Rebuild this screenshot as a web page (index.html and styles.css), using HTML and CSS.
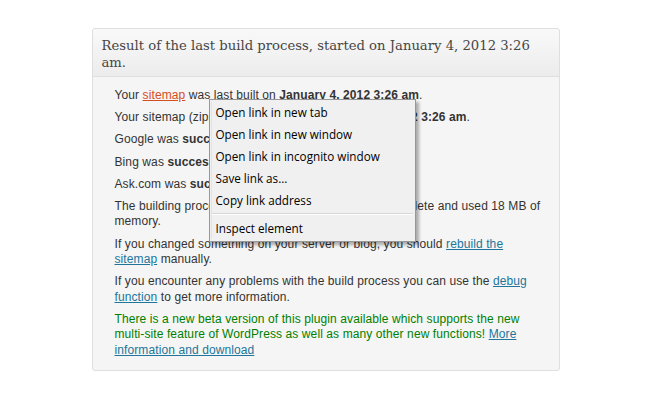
FILE: index.html
```html
<!DOCTYPE html>
<html>
<head>
<meta charset="utf-8">
<link rel="stylesheet" href="styles.css">
</head>
<body>
<div class="page">
  <div class="postbox">
    <h3 class="hndle">Result of the last build process, started on January 4, 2012 3:26 am.</h3>
    <div class="inside">
      <p>Your <a class="active" href="#">sitemap</a> was last built on <b>January 4, 2012 3:26 am</b>.</p>
      <p>Your sitemap (zipped) was last built on <b>January 4, 2012 3:26 am</b>.</p>
      <p>Google was <b>successfully notified</b> about changes.</p>
      <p>Bing was <b>successfully notified</b> about changes.</p>
      <p>Ask.com was <b>successfully notified</b> about changes.</p>
      <p>The building process took about <b>0.21 seconds</b> to complete and used 18 MB of memory.</p>
      <p>If you changed something on your server or blog, you should <a href="#">rebuild the sitemap</a> manually.</p>
      <p>If you encounter any problems with the build process you can use the <a href="#">debug function</a> to get more information.</p>
      <p class="beta">There is a new beta version of this plugin available which supports the new multi-site feature of WordPress as well as many other new functions! <a href="#">More information and download</a></p>
    </div>
    <div class="menu">
      <div class="item">Open link in new tab</div>
      <div class="item">Open link in new window</div>
      <div class="item">Open link in incognito window</div>
      <div class="item">Save link as...</div>
      <div class="item">Copy link address</div>
      <div class="sep"></div>
      <div class="item">Inspect element</div>
    </div>
  </div>
</div>
</body>
</html>
```
FILE: styles.css
```css
html, body {
  margin: 0;
  padding: 0;
  background: #fff;
}
.page {
  padding-top: 28px;
  display: flex;
  justify-content: center;
}
.postbox {
  position: relative;
  width: 466px;
  border: 1px solid #dfdfdf;
  border-radius: 3px;
  background: #f5f5f5;
  margin-right: 1px;
}
.hndle {
  margin: 0;
  padding: 8px 10px 5px 9px;
  font-family: "DejaVu Serif", Georgia, serif;
  font-weight: normal;
  font-size: 13.2px;
  line-height: 17px;
  color: #464646;
  background: linear-gradient(#f9f9f9, #ececec);
  border-bottom: 1px solid #dfdfdf;
  border-radius: 3px 3px 0 0;
}
.inside {
  padding: 11px 12px 5px 22px;
  font-family: "Liberation Sans", Arial, sans-serif;
  font-size: 12px;
  line-height: 15.4px;
  letter-spacing: 0.1px;
  color: #333;
}
.inside p {
  margin: 0 0 6.8px 0;
}
.inside a {
  color: #21759b;
  text-decoration: underline;
}
.inside a.active {
  color: #d54e21;
}
.beta {
  color: #008000;
}
.menu {
  position: absolute;
  left: 116px;
  top: 70px;
  width: 205px;
  padding: 1px 0 2px 0;
  background: #f0f0f0;
  border: 1px solid #979797;
  box-shadow: 3px 3px 3px rgba(0,0,0,0.3);
  font-family: "Open Sans", "Noto Sans", sans-serif;
  font-size: 11.7px;
  color: #000;
}
.menu::before {
  content: "";
  position: absolute;
  left: 1px;
  top: 2px;
  bottom: 2px;
  width: 1px;
  background: #e2e3e3;
}
.item {
  height: 22px;
  line-height: 22px;
  padding-left: 6px;
}
.sep {
  height: 1px;
  margin: 2px 2px 2px 2px;
  background: #d7d7d7;
  border-bottom: 1px solid #fff;
}
```
